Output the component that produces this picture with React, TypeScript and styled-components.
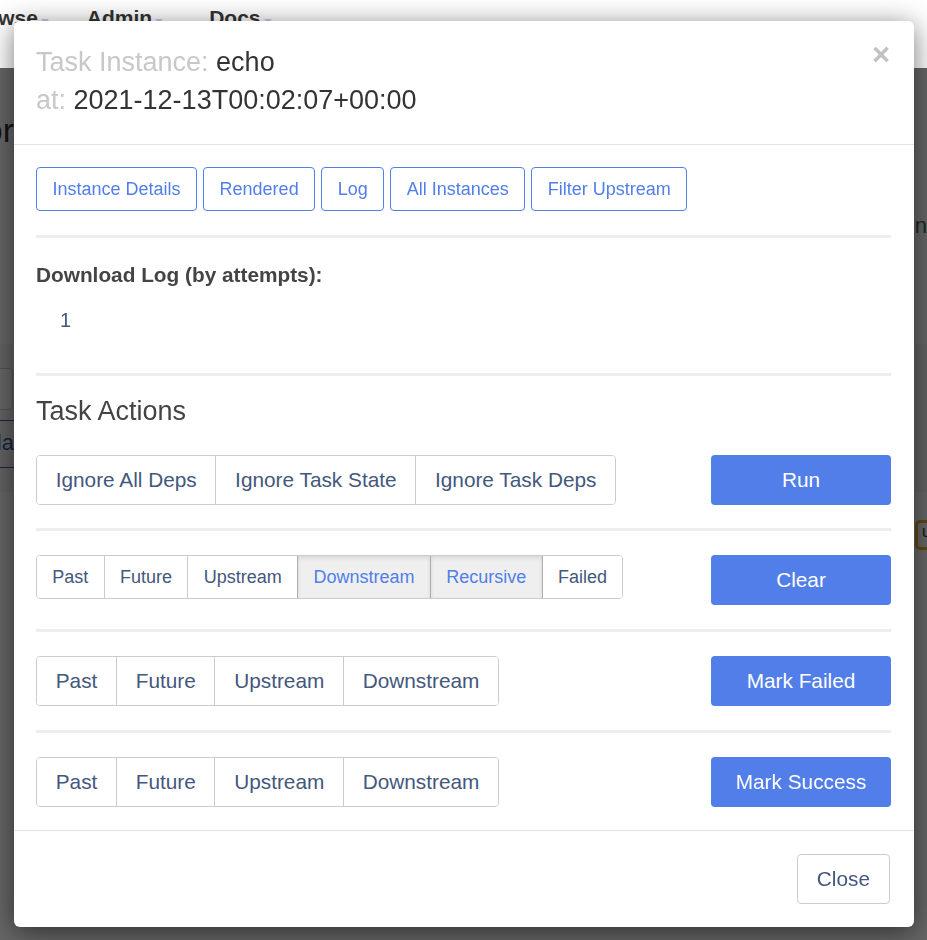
import React from "react";
import styled, { createGlobalStyle, css } from "styled-components";

const GlobalStyle = createGlobalStyle`
  html, body { margin: 0; padding: 0; }
  body {
    background: #ffffff;
    font-family: "Liberation Sans", Arial, Helvetica, sans-serif;
    color: #333;
    overflow: hidden;
  }
  * { box-sizing: border-box; }
`;

const Page = styled.div`
  width: 927px;
  height: 940px;
  overflow: hidden;
  position: relative;
`;

const NavBar = styled.nav`
  height: 68px;
  background: #ffffff;
  display: flex;
  align-items: flex-start;
  gap: 38px;
  padding-top: 6px;
  margin-left: -38px;
  position: relative;
  z-index: 2;
`;

const NavItem = styled.span`
  font-size: 21px;
  font-weight: bold;
  color: #333;
  display: inline-flex;
  align-items: flex-start;
  gap: 3px;
  & + & + & {
    margin-left: 8px;
  }
`;

const Caret = styled.span`
  display: inline-block;
  width: 8px;
  height: 0;
  border-top: 4px solid #d4c4e4;
  border-left: 4px solid transparent;
  border-right: 4px solid transparent;
  margin-top: 13px;
`;

const Content = styled.main`
  display: flex;
  flex-direction: column;
`;

const PageHeading = styled.h1`
  margin: 42px 0 0 -186px;
  width: 200px;
  text-align: right;
  font-size: 34px;
  font-weight: normal;
  color: #333;
  line-height: 40px;
  white-space: nowrap;
`;

const RightText = styled.div`
  align-self: flex-end;
  margin: 63px -6px 0 0;
  font-size: 22px;
  color: #4a5a7c;
`;

const Band = styled.section`
  margin-top: 105px;
  height: 148px;
  background: #f6f6f6;
  padding-top: 24px;
  display: flex;
  flex-direction: column;
`;

const BandBox = styled.div`
  width: 40px;
  height: 42px;
  margin-left: -27px;
  border: 1px solid #ccc;
  border-radius: 4px;
  background: #fff;
`;

const BandTab = styled.div`
  margin: 10px 0 0 -46px;
  width: 60px;
  height: 48px;
  border-top: 1px solid #3b5ba9;
  border-bottom: 1px solid #3b5ba9;
  font-size: 22px;
  color: #3b5ba9;
  line-height: 44px;
  text-align: right;
  white-space: nowrap;
`;

const BadgeRow = styled.div`
  display: flex;
  justify-content: flex-end;
  margin-top: 28px;
  margin-right: -20px;
`;

const Badge = styled.span`
  width: 32px;
  height: 30px;
  border: 3px solid #f0b030;
  border-radius: 5px;
  background: #fff;
  font-size: 16px;
  padding-left: 4px;
  color: #333;
`;

const Backdrop = styled.div`
  position: fixed;
  left: 0;
  right: 0;
  top: 68px;
  bottom: 0;
  background: rgba(0, 0, 0, 0.6);
  z-index: 1;
`;

const Modal = styled.div`
  position: fixed;
  left: 14px;
  top: 21px;
  width: 900px;
  background: #ffffff;
  border-radius: 6px;
  box-shadow: 0 5px 28px rgba(0, 0, 0, 0.55);
  z-index: 3;
  display: flex;
  flex-direction: column;
`;

const ModalHeader = styled.header`
  display: flex;
  justify-content: space-between;
  align-items: flex-start;
  padding: 22px 24px 25px 22px;
  border-bottom: 1px solid #e5e5e5;
`;

const Title = styled.h4`
  margin: 0;
  font-size: 27px;
  font-weight: normal;
  line-height: 38px;
  color: #333;
`;

const Muted = styled.span`
  color: #c8c8c8;
`;

const CloseX = styled.button`
  border: 0;
  background: transparent;
  padding: 0;
  margin-top: -2px;
  font-family: "Liberation Sans", Arial, sans-serif;
  font-size: 31px;
  font-weight: bold;
  line-height: 28px;
  color: #c2c2c2;
  cursor: pointer;
`;

const ModalBody = styled.div`
  padding: 22px 23px 23px 22px;
  display: flex;
  flex-direction: column;
`;

const LinkRow = styled.div`
  display: flex;
  gap: 6px;
`;

const OutlineButton = styled.button`
  height: 44px;
  padding: 0 15.5px;
  background: #fff;
  border: 1px solid #517ee8;
  border-radius: 4px;
  color: #517ee8;
  font-family: inherit;
  font-size: 18px;
`;

const Divider = styled.hr<{ $top: number }>`
  margin: ${(p) => p.$top}px 0 0 0;
  border: 0;
  border-top: 3px solid #eeeeee;
  height: 0;
`;

const DownloadLabel = styled.div`
  margin-top: 25px;
  font-size: 20.8px;
  font-weight: bold;
  line-height: 24px;
  color: #444;
`;

const AttemptLink = styled.a`
  margin: 20px 0 0 24px;
  font-size: 20px;
  line-height: 26px;
  color: #44577c;
  text-decoration: none;
`;

const SectionTitle = styled.h3`
  margin: 19px 0 0 0;
  font-size: 27px;
  font-weight: normal;
  line-height: 32px;
  color: #444;
`;

const ActionRow = styled.div<{ $top: number }>`
  display: flex;
  justify-content: space-between;
  align-items: flex-start;
  margin-top: ${(p) => p.$top}px;
`;

const Group = styled.div`
  display: flex;
  border: 1px solid #cccccc;
  border-radius: 4px;
  overflow: hidden;
`;

const GroupButton = styled.button<{ $size: "sm" | "lg"; $active?: boolean }>`
  border: 0;
  border-left: 1px solid #cccccc;
  background: #fff;
  font-family: inherit;
  color: #44577c;
  ${(p) =>
    p.$size === "lg"
      ? css`
          height: 48px;
          font-size: 20.8px;
          padding: 0 18.7px;
        `
      : css`
          height: 42px;
          font-size: 18px;
          padding: 0 15.35px;
        `}
  &:first-child {
    border-left: 0;
  }
  ${(p) =>
    p.$active &&
    css`
      background: #efefef;
      color: #517ee8;
      box-shadow: inset 0 2px 4px rgba(0, 0, 0, 0.1);
      border-left-color: #adadad;
      & + button {
        border-left-color: #adadad;
      }
    `}
`;

const PrimaryButton = styled.button`
  width: 180px;
  height: 50px;
  border: 0;
  border-radius: 4px;
  background: #517ee8;
  color: #ffffff;
  font-family: inherit;
  font-size: 20.8px;
`;

const ModalFooter = styled.footer`
  display: flex;
  justify-content: flex-end;
  padding: 23px 24px 23px 22px;
  border-top: 1px solid #e5e5e5;
`;

const DefaultButton = styled.button`
  height: 50px;
  padding: 0 19px;
  background: #fff;
  border: 1px solid #cccccc;
  border-radius: 4px;
  color: #44577c;
  font-family: inherit;
  font-size: 20.8px;
`;

const topLinks = ["Instance Details", "Rendered", "Log", "All Instances", "Filter Upstream"];

type Opt = { label: string; active?: boolean };

const rows: { size: "sm" | "lg"; options: Opt[]; action: string; gap: number }[] = [
  {
    size: "lg",
    options: [{ label: "Ignore All Deps" }, { label: "Ignore Task State" }, { label: "Ignore Task Deps" }],
    action: "Run",
    gap: 0,
  },
  {
    size: "sm",
    options: [
      { label: "Past" },
      { label: "Future" },
      { label: "Upstream" },
      { label: "Downstream", active: true },
      { label: "Recursive", active: true },
      { label: "Failed" },
    ],
    action: "Clear",
    gap: 23,
  },
  {
    size: "lg",
    options: [{ label: "Past" }, { label: "Future" }, { label: "Upstream" }, { label: "Downstream" }],
    action: "Mark Failed",
    gap: 24,
  },
  {
    size: "lg",
    options: [{ label: "Past" }, { label: "Future" }, { label: "Upstream" }, { label: "Downstream" }],
    action: "Mark Success",
    gap: 24,
  },
];

export default function App() {
  return (
    <Page>
      <GlobalStyle />
      <NavBar>
        <NavItem>
          Browse<Caret />
        </NavItem>
        <NavItem>
          Admin<Caret />
        </NavItem>
        <NavItem>
          Docs<Caret />
        </NavItem>
      </NavBar>
      <Content>
        <PageHeading>DAG: tutor</PageHeading>
        <RightText>nt</RightText>
        <Band>
          <BandBox />
          <BandTab>Upda</BandTab>
        </Band>
        <BadgeRow>
          <Badge>u</Badge>
        </BadgeRow>
      </Content>
      <Backdrop />
      <Modal role="dialog">
        <ModalHeader>
          <Title>
            <Muted>Task Instance:</Muted> echo
            <br />
            <Muted>at:</Muted> 2021-12-13T00:02:07+00:00
          </Title>
          <CloseX aria-label="Close">×</CloseX>
        </ModalHeader>
        <ModalBody>
          <LinkRow>
            {topLinks.map((l) => (
              <OutlineButton key={l}>{l}</OutlineButton>
            ))}
          </LinkRow>
          <Divider $top={24} />
          <DownloadLabel>Download Log (by attempts):</DownloadLabel>
          <AttemptLink href="#">1</AttemptLink>
          <Divider $top={40} />
          <SectionTitle>Task Actions</SectionTitle>
          {rows.map((r, i) => (
            <React.Fragment key={r.action}>
              {i > 0 && <Divider $top={r.gap} />}
              <ActionRow $top={i === 0 ? 28 : 24}>
                <Group>
                  {r.options.map((o) => (
                    <GroupButton key={o.label} $size={r.size} $active={o.active}>
                      {o.label}
                    </GroupButton>
                  ))}
                </Group>
                <PrimaryButton>{r.action}</PrimaryButton>
              </ActionRow>
            </React.Fragment>
          ))}
        </ModalBody>
        <ModalFooter>
          <DefaultButton>Close</DefaultButton>
        </ModalFooter>
      </Modal>
    </Page>
  );
}
